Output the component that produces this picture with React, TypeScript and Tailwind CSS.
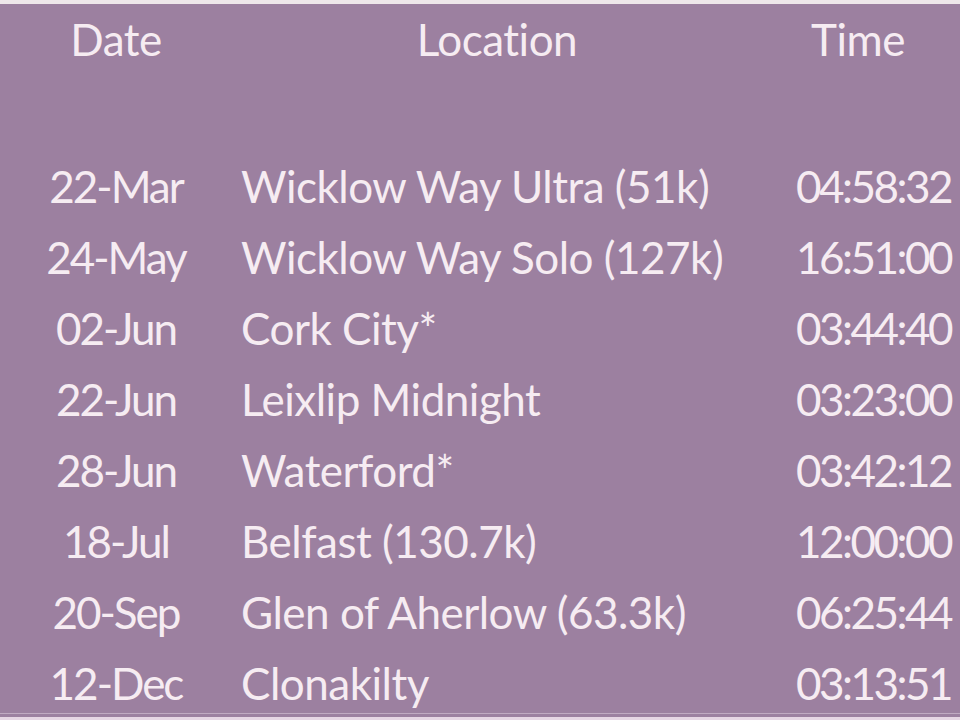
import React from "react";

const rows: [string, string, string][] = [
  ["22-Mar", "Wicklow Way Ultra (51k)", "04:58:32"],
  ["24-May", "Wicklow Way Solo (127k)", "16:51:00"],
  ["02-Jun", "Cork City*", "03:44:40"],
  ["22-Jun", "Leixlip Midnight", "03:23:00"],
  ["28-Jun", "Waterford*", "03:42:12"],
  ["18-Jul", "Belfast (130.7k)", "12:00:00"],
  ["20-Sep", "Glen of Aherlow (63.3k)", "06:25:44"],
  ["12-Dec", "Clonakilty", "03:13:51"],
];

export default function App() {
  return (
    <div
      className="w-[960px] h-[720px] overflow-hidden bg-[#efe8ec] flex flex-col"
      style={{ fontFamily: "Lato, 'Open Sans', sans-serif" }}
    >
      <div className="h-[4px] shrink-0 bg-[#eee7ea]" />
      <div className="flex-1 min-h-0 bg-[#9c80a0] text-[#f6ecf2] text-[44px] flex flex-col">
        <div className="flex-1 min-h-0 overflow-hidden flex flex-col">
          <div className="flex shrink-0 h-[71px] leading-[71px] tracking-[-0.5px]">
            <div className="w-[232px] text-center">Date</div>
            <div className="w-[530px] text-center">Location</div>
            <div className="w-[124px] ml-[34px] text-center">Time</div>
          </div>
          <div className="h-[76px] shrink-0" />
          {rows.map(([d, l, t]) => (
            <div key={d} className="flex shrink-0 h-[71px] leading-[71px] whitespace-nowrap">
              <div className="w-[232px] text-center tracking-[-2px]">{d}</div>
              <div className="w-[564px] pl-[9px] tracking-[-0.5px]">{l}</div>
              <div className="w-[164px] tracking-[-2.5px]">{t}</div>
            </div>
          ))}
        </div>
        <div className="h-[1px] shrink-0 bg-[#c0aac2] mb-[3px]" />
      </div>
      <div className="h-[3px] shrink-0 bg-[#e6d6e4]" />
    </div>
  );
}
